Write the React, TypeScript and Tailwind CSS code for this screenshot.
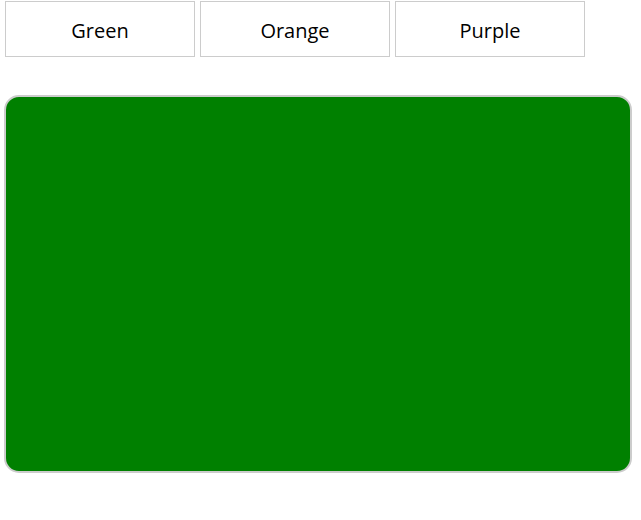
export default function App() {
  const btns = ["Green", "Orange", "Purple"];
  return (
    <div className="w-[641px] h-[520px] bg-white" style={{ fontFamily: '"Source Sans Pro", "Open Sans", sans-serif' }}>
      <div className="flex gap-[5px] pl-[5px] pt-[1px]">
        {btns.map((b) => (
          <button key={b} className="w-[190px] h-[56px] pt-[3px] border border-[#cccccc] bg-white text-[20px] text-black">
            {b}
          </button>
        ))}
      </div>
      <div className="ml-[4px] mt-[38px] w-[628px] h-[378px] rounded-[15px] border-2 border-[#cccccc] bg-[#008000]" />
    </div>
  );
}
